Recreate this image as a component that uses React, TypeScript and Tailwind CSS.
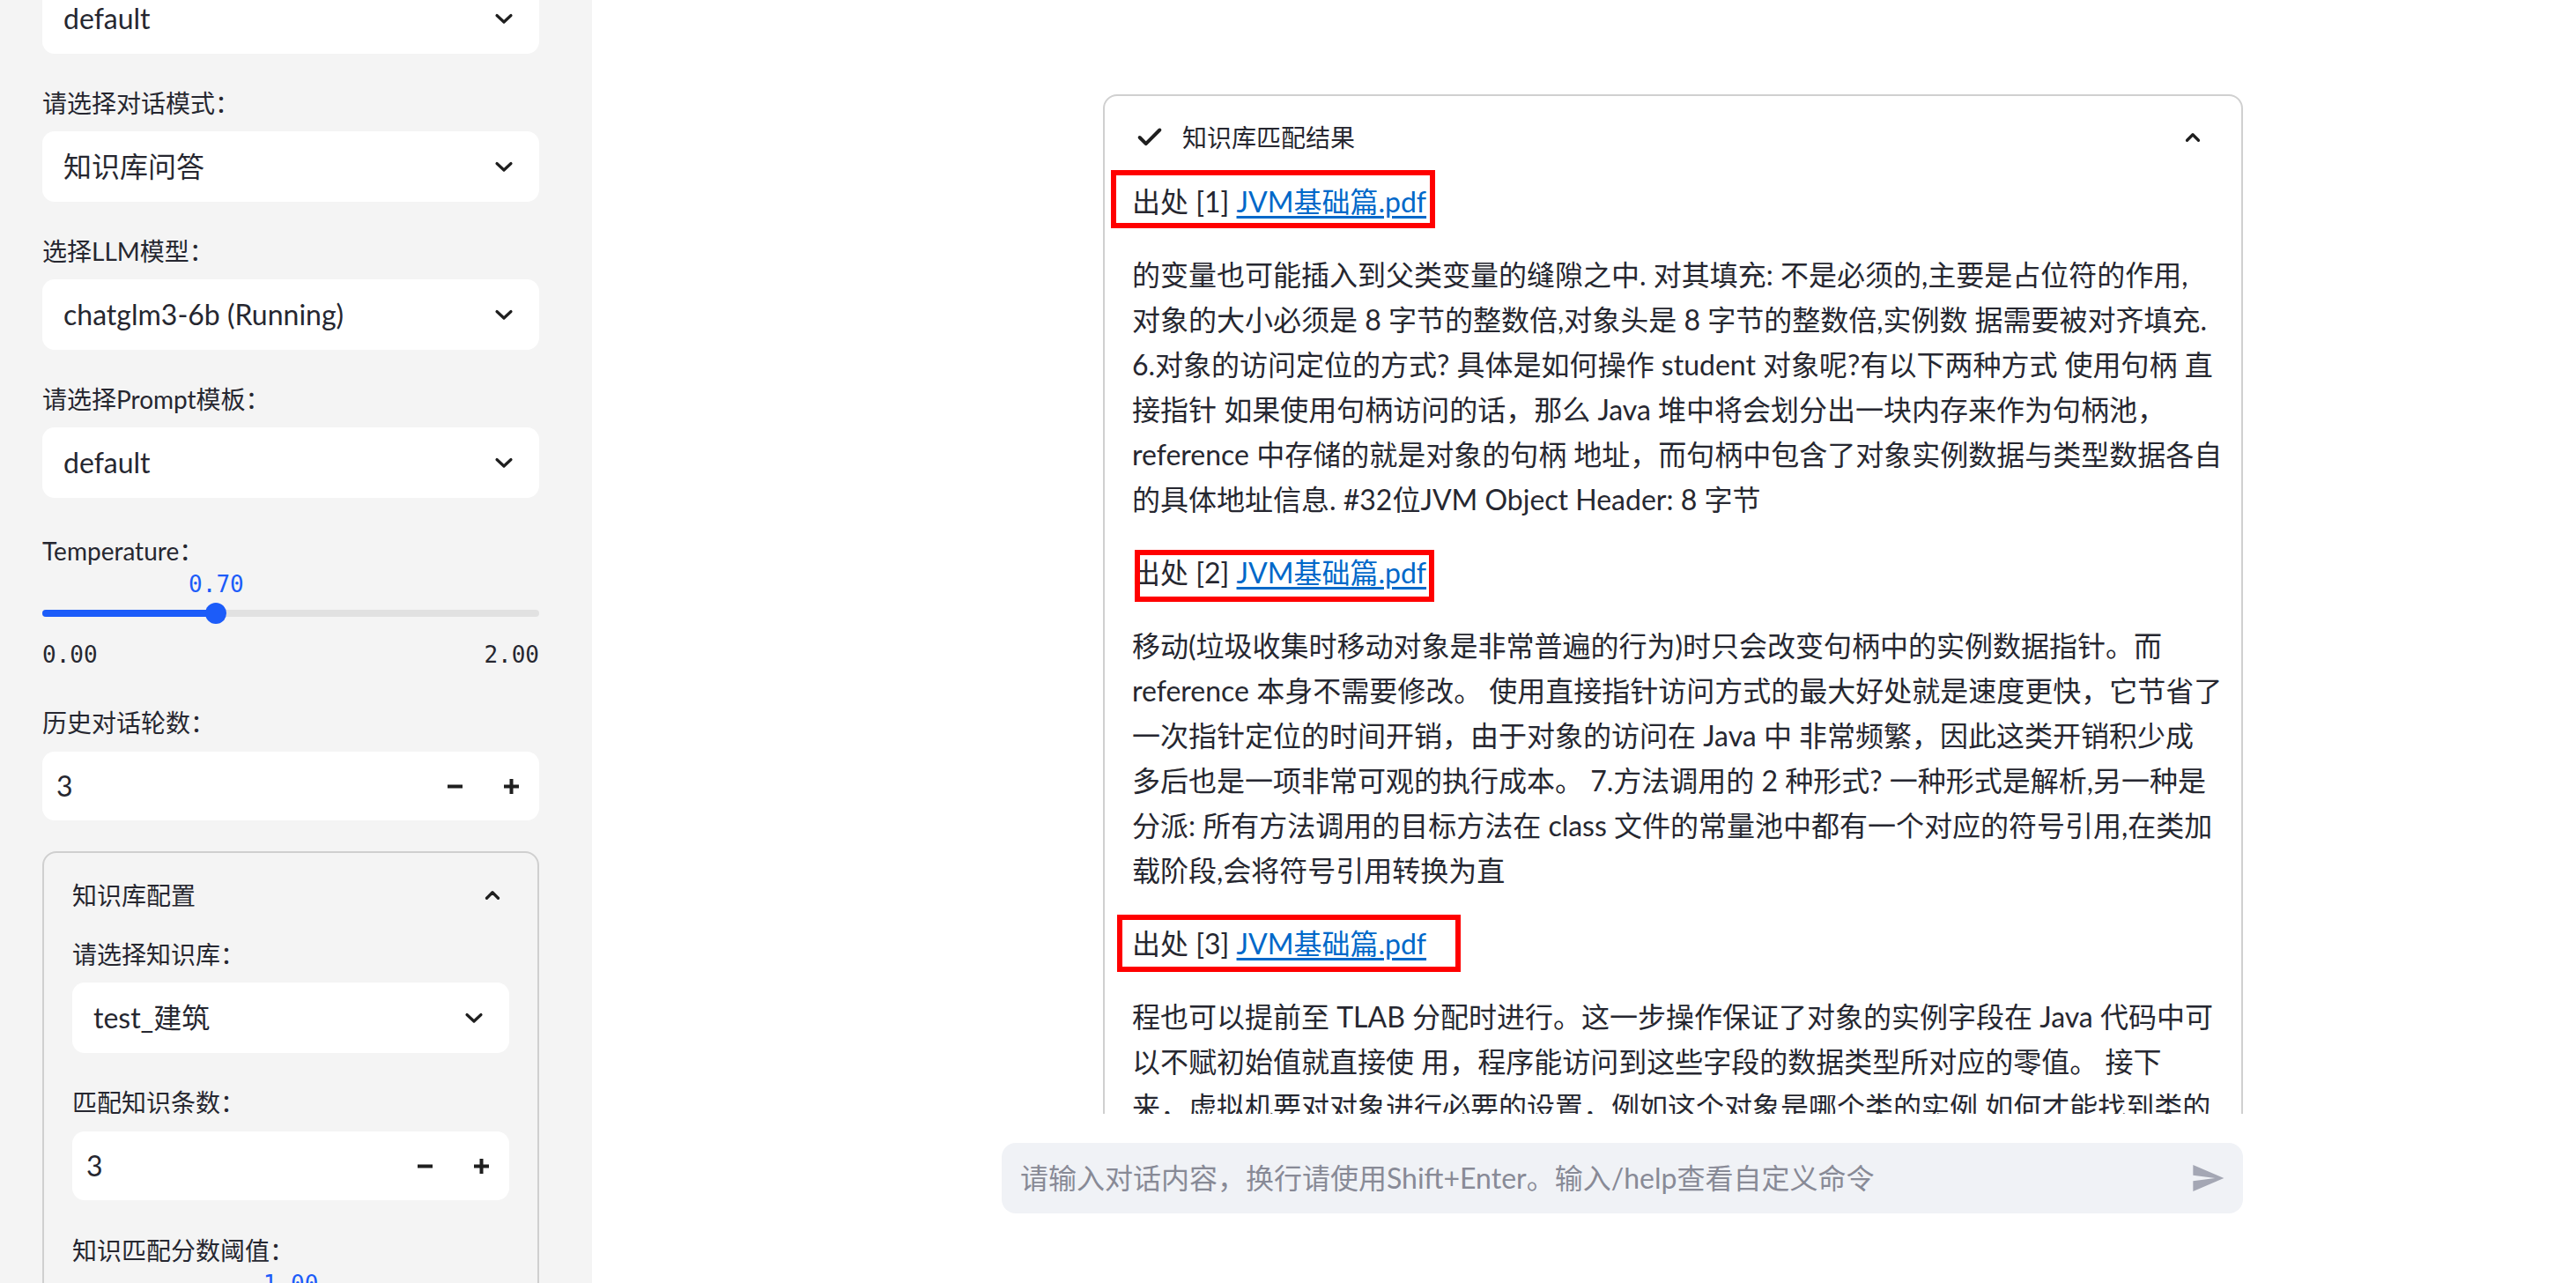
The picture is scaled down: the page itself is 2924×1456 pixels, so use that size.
import { Check, ChevronUp } from 'lucide-react';
import type { ReactNode } from 'react';

// 侧边栏下拉框
function SelectBox({ value }: { value: string }) {
  return (
    <div className="flex h-[80px] items-center justify-between rounded-[14px] bg-white pl-[24px] pr-[28px] text-[32px] text-[#262730]">
      <span>{value}</span>
      <svg width="24" height="24" viewBox="0 0 24 24" fill="none" stroke="#1f1f1f" strokeWidth="3.2" strokeLinecap="round" strokeLinejoin="round">
        <polyline points="4 8.5 12 16 20 8.5" />
      </svg>
    </div>
  );
}

function NumberBox({ value }: { value: string }) {
  return (
    <div className="flex h-[78px] items-center rounded-[14px] bg-white text-[32px] text-[#262730]">
      <span className="flex-1 pl-[16px]">{value}</span>
      <div className="flex h-full w-[64px] items-center justify-center">
        <svg width="17" height="17" viewBox="0 0 17 17"><rect x="0" y="6.5" width="17" height="4" fill="#1f1f1f" /></svg>
      </div>
      <div className="flex h-full w-[64px] items-center justify-center">
        <svg width="17" height="17" viewBox="0 0 17 17">
          <rect x="0" y="6.5" width="17" height="4" fill="#1f1f1f" />
          <rect x="6.5" y="0" width="4" height="17" fill="#1f1f1f" />
        </svg>
      </div>
    </div>
  );
}

function Field({ label, top, gap, children }: { label: string; top: string; gap: string; children: ReactNode }) {
  return (
    <div className={top}>
      <div className="h-[40px] text-[28px] leading-[40px] text-[#262730]">{label}</div>
      <div className={gap}>{children}</div>
    </div>
  );
}

function Slider({ value, min, max }: { value: number; min: number; max: number }) {
  const pct = ((value - min) / (max - min)) * 100;
  return (
    <div>
      <div className="relative mt-[4px] h-[28px]">
        <span
          className="absolute top-0 -translate-x-1/2 font-['DejaVu_Sans_Mono',monospace] text-[26px] leading-[28px] text-[#1c5cf9]"
          style={{ left: `${pct}%` }}
        >
          {value.toFixed(2)}
        </span>
      </div>
      <div className="relative mt-[7px] flex h-[24px] items-center">
        <div className="h-[8px] w-full rounded-full bg-[#e1e1e1]">
          <div className="h-full rounded-full bg-[#1c5cf9]" style={{ width: `${pct}%` }} />
        </div>
        <div className="absolute top-0 h-[24px] w-[24px] -translate-x-1/2 rounded-full bg-[#1c5cf9]" style={{ left: `${pct}%` }} />
      </div>
      <div className="mt-[21px] flex justify-between font-['DejaVu_Sans_Mono',monospace] text-[26px] leading-[28px] text-[#262730]">
        <span>{min.toFixed(2)}</span>
        <span>{max.toFixed(2)}</span>
      </div>
    </div>
  );
}

function Sidebar() {
  return (
    <aside className="h-full w-[672px] shrink-0 overflow-hidden bg-[#f4f4f4] pl-[48px] pr-[60px]">
      <div className="-mt-[19px]">
        <SelectBox value="default" />
      </div>
      <Field label="请选择对话模式：" top="mt-[36px]" gap="mt-[12px]">
        <SelectBox value="知识库问答" />
      </Field>
      <Field label="选择LLM模型：" top="mt-[36px]" gap="mt-[12px]">
        <SelectBox value="chatglm3-6b (Running)" />
      </Field>
      <Field label="请选择Prompt模板：" top="mt-[36px]" gap="mt-[12px]">
        <SelectBox value="default" />
      </Field>
      <Field label="Temperature：" top="mt-[40px]" gap="mt-0">
        <Slider value={0.7} min={0} max={2} />
      </Field>
      <Field label="历史对话轮数：" top="mt-[43px]" gap="mt-[13px]">
        <NumberBox value="3" />
      </Field>

      {/* 知识库配置 */}
      <div className="mt-[35px] rounded-[16px] border-2 border-[#cfcfcf] pb-[40px]">
        <div className="flex h-[95px] items-center justify-between pl-[32px] pr-[38px] text-[28px] text-[#262730]">
          <span>知识库配置</span>
          <ChevronUp size={26} strokeWidth={3} color="#1f1f1f" />
        </div>
        <div className="px-[32px]">
          <Field label="请选择知识库：" top="mt-0" gap="mt-[12px]">
            <SelectBox value="test_建筑" />
          </Field>
          <Field label="匹配知识条数：" top="mt-[36px]" gap="mt-[13px]">
            <NumberBox value="3" />
          </Field>
          <Field label="知识匹配分数阈值：" top="mt-[37px]" gap="mt-0">
            <Slider value={1} min={0} max={2} />
          </Field>
        </div>
      </div>
    </aside>
  );
}

const sources = [
  {
    n: 1,
    box: 'left-[-24px] top-[-10px] w-[368px] h-[66px]',
    lines: [
      '的变量也可能插入到父类变量的缝隙之中. 对其填充: 不是必须的,主要是占位符的作用,',
      '对象的大小必须是 8 字节的整数倍,对象头是 8 字节的整数倍,实例数 据需要被对齐填充.',
      '6.对象的访问定位的方式? 具体是如何操作 student 对象呢?有以下两种方式 使用句柄 直',
      '接指针 如果使用句柄访问的话，那么 Java 堆中将会划分出一块内存来作为句柄池，',
      'reference 中存储的就是对象的句柄 地址，而句柄中包含了对象实例数据与类型数据各自',
      '的具体地址信息. #32位JVM Object Header: 8 字节',
    ],
  },
  {
    n: 2,
    box: 'left-[3px] top-0 w-[340px] h-[59px]',
    lines: [
      '移动(垃圾收集时移动对象是非常普遍的行为)时只会改变句柄中的实例数据指针。而',
      'reference 本身不需要修改。 使用直接指针访问方式的最大好处就是速度更快，它节省了',
      '一次指针定位的时间开销，由于对象的访问在 Java 中 非常频繁，因此这类开销积少成',
      '多后也是一项非常可观的执行成本。 7.方法调用的 2 种形式? 一种形式是解析,另一种是',
      '分派: 所有方法调用的目标方法在 class 文件的常量池中都有一个对应的符号引用,在类加',
      '载阶段,会将符号引用转换为直',
    ],
  },
  {
    n: 3,
    box: 'left-[-17px] top-[-7px] w-[390px] h-[65px]',
    lines: [
      '程也可以提前至 TLAB 分配时进行。这一步操作保证了对象的实例字段在 Java 代码中可',
      '以不赋初始值就直接使 用，程序能访问到这些字段的数据类型所对应的零值。 接下',
      '来，虚拟机要对对象进行必要的设置，例如这个对象是哪个类的实例 如何才能找到类的',
    ],
  },
];

function ResultExpander() {
  return (
    <div className="w-[1294px] rounded-[16px] border-2 border-[#d0d0d0] bg-white">
      <div className="flex h-[94px] items-center justify-between pl-[34px] pr-[42px] text-[28px] text-[#262730]">
        <div className="flex items-center gap-[20px]">
          <Check size={34} strokeWidth={2.8} color="#1f1f1f" />
          <span>知识库匹配结果</span>
        </div>
        <ChevronUp size={26} strokeWidth={3} color="#1f1f1f" />
      </div>
      <div className="pl-[31px] pr-[20px] text-[32px] leading-[51px] text-[#262730]">
        {sources.map((s, i) => (
          <div key={s.n} className={i === 0 ? '' : 'mt-[32px]'}>
            <div className="relative inline-block">
              出处 [{s.n}] <span className="text-[#0068c9] underline underline-offset-[4px]">JVM基础篇.pdf</span>
              <div className={`pointer-events-none absolute border-[6px] border-[#ff0000] ${s.box}`} />
            </div>
            <p className="mt-[32px] whitespace-nowrap">
              {s.lines.map((l, j) => (
                <span key={j}>
                  {l}
                  {j < s.lines.length - 1 && <br />}
                </span>
              ))}
            </p>
          </div>
        ))}
      </div>
    </div>
  );
}

export default function App() {
  return (
    <div className="flex h-[1456px] w-[2924px] overflow-hidden bg-white font-['Lato','Noto_Sans_CJK_SC',sans-serif]">
      <Sidebar />
      <main className="flex h-full flex-1 flex-col bg-white">
        <div className="flex-1 overflow-hidden pl-[580px] pt-[107px]">
          <ResultExpander />
        </div>
        <div className="h-[192px] shrink-0 bg-white pl-[465px] pt-[33px]">
          <div className="flex h-[80px] w-[1409px] items-center justify-between rounded-[16px] bg-[#f0f2f6] pl-[21px] pr-[20px]">
            <span className="text-[32px] text-[#888a96]">请输入对话内容，换行请使用Shift+Enter。输入/help查看自定义命令</span>
            <svg width="40" height="40" viewBox="0 0 24 24" fill="#a4a7b4">
              <path d="M2.01 21L23 12 2.01 3 2 10l15 2-15 2z" />
            </svg>
          </div>
        </div>
      </main>
    </div>
  );
}
